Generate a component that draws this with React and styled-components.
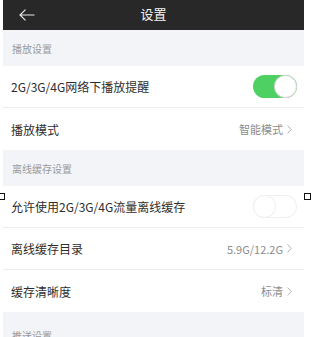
import React from "react";
import styled, { createGlobalStyle } from "styled-components";

const GlobalStyle = createGlobalStyle`
  html, body {
    margin: 0;
    padding: 0;
    background: #fff;
  }
  body {
    font-family: "Noto Sans CJK SC", "Noto Sans", sans-serif;
  }
`;

const Canvas = styled.div`
  position: relative;
  width: 315px;
  height: 337px;
  overflow: hidden;
  background: #fff;
`;

const Screen = styled.div`
  margin-left: 3px;
  width: 301px;
  display: flex;
  flex-direction: column;
`;

const TopBar = styled.header`
  height: 30px;
  background: #282828;
  display: grid;
  grid-template-columns: 40px 1fr 40px;
  align-items: center;
`;

const BackButton = styled.div`
  display: flex;
  align-items: center;
  padding-left: 16px;
`;

const Title = styled.h1`
  margin: 0 0 3px;
  text-align: center;
  color: #f4f4f4;
  font-size: 13px;
  font-weight: 400;
  line-height: 1;
`;

const SectionHead = styled.div`
  height: ${(p) => p.$h || 36}px;
  background: #f3f4f8;
  display: flex;
  align-items: center;
  padding: 0 9px;
  padding-top: ${(p) => p.$pt || 0}px;
  box-sizing: border-box;
  color: #9a9a9a;
  font-size: 10px;
`;

const Row = styled.div`
  height: 42px;
  display: flex;
  align-items: center;
  justify-content: space-between;
  padding: 0 7px 0 8px;
  box-sizing: border-box;
  border-bottom: ${(p) => (p.$last ? "none" : "1px solid #ececee")};
`;

const Label = styled.span`
  color: #2e2e2e;
  font-size: 12px;
`;

const Value = styled.span`
  display: flex;
  align-items: center;
  gap: 4px;
  color: #8c8c8c;
  font-size: 11px;
  padding-right: 5px;
`;

const Toggle = styled.div`
  position: relative;
  width: 44px;
  height: 23px;
  border-radius: 12px;
  background: ${(p) => (p.$on ? "#4fd062" : "#fff")};
  box-shadow: ${(p) => (p.$on ? "none" : "inset 0 0 0 1px #f0f0f0")};

  &::after {
    content: "";
    position: absolute;
    top: 1px;
    left: ${(p) => (p.$on ? "22px" : "1px")};
    width: 21px;
    height: 21px;
    border-radius: 50%;
    background: #fff;
    box-shadow: ${(p) =>
      p.$on ? "0 0 0 1px #d6d6d6" : "0 0 0 1px #f0f0f0"};
  }
`;

const Handle = styled.div`
  position: absolute;
  top: 193px;
  left: ${(p) => p.$x}px;
  width: 5px;
  height: 5px;
  border: 1px solid #111;
  background: #fff;
`;

const Chevron = () => (
  <svg width="5" height="9" viewBox="0 0 5 9">
    <path d="M0.6 0.6 L4.2 4.5 L0.6 8.4" fill="none" stroke="#a8a8a8" strokeWidth="0.9" />
  </svg>
);

const BackArrow = () => (
  <svg width="16" height="12" viewBox="0 0 16 12">
    <path
      d="M15.5 6 H1 M6.5 0.6 L1 6 L6.5 11.4"
      fill="none"
      stroke="#e8e8e8"
      strokeWidth="1.2"
    />
  </svg>
);

export default function App() {
  return (
    <Canvas>
      <GlobalStyle />
      <Screen>
        <TopBar>
          <BackButton>
            <BackArrow />
          </BackButton>
          <Title>设置</Title>
          <div />
        </TopBar>

        <SectionHead $h={36}>播放设置</SectionHead>
        <Row>
          <Label>2G/3G/4G网络下播放提醒</Label>
          <Toggle $on />
        </Row>
        <Row $last>
          <Label>播放模式</Label>
          <Value>
            智能模式 <Chevron />
          </Value>
        </Row>

        <SectionHead $h={36}>离线缓存设置</SectionHead>
        <Row>
          <Label>允许使用2G/3G/4G流量离线缓存</Label>
          <Toggle />
        </Row>
        <Row>
          <Label>离线缓存目录</Label>
          <Value>
            5.9G/12.2G <Chevron />
          </Value>
        </Row>
        <Row $last>
          <Label>缓存清晰度</Label>
          <Value>
            标清 <Chevron />
          </Value>
        </Row>

        <SectionHead $h={36} $pt={10}>推送设置</SectionHead>
      </Screen>
      <Handle $x={-2} />
      <Handle $x={304} />
    </Canvas>
  );
}
